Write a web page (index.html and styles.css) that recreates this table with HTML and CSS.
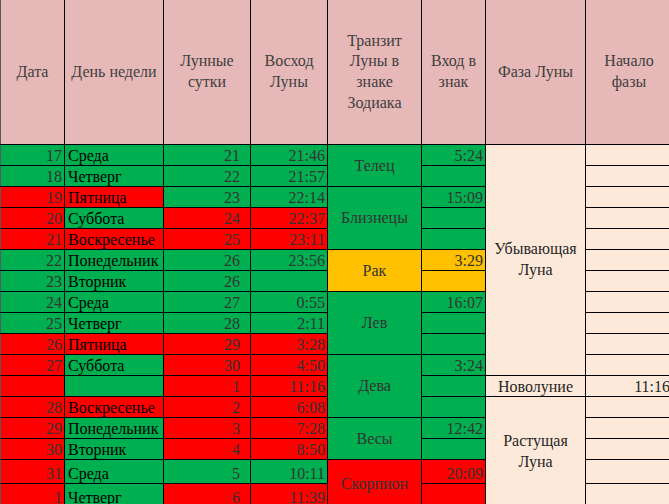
FILE: index.html
```html
<!DOCTYPE html>
<html lang="ru">
<head>
<meta charset="utf-8">
<title>Лунный календарь</title>
<link rel="stylesheet" href="styles.css">
</head>
<body>
<div class="sheet">
<table class="cal">
<colgroup>
<col class="c-date"><col class="c-day"><col class="c-lday"><col class="c-rise"><col class="c-sign"><col class="c-enter"><col class="c-phase"><col class="c-start">
</colgroup>
<thead>
<tr>
<th>Дата</th>
<th>День недели</th>
<th>Лунные<br>сутки</th>
<th>Восход<br>Луны</th>
<th>Транзит<br>Луны в<br>знаке<br>Зодиака</th>
<th>Вход в<br>знак</th>
<th>Фаза Луны</th>
<th>Начало<br>фазы</th>
</tr>
</thead>
<tbody>
<tr>
<td class="num g">17</td><td class="day g">Среда</td><td class="lun g">21</td><td class="num g">21:46</td>
<td class="sign g" rowspan="2">Телец</td><td class="num g">5:24</td>
<td class="phase" rowspan="11">Убывающая<br>Луна</td><td class="num p"></td>
</tr>
<tr>
<td class="num g">18</td><td class="day g">Четверг</td><td class="lun g">22</td><td class="num g">21:57</td>
<td class="num g"></td><td class="num p"></td>
</tr>
<tr>
<td class="num r">19</td><td class="day r">Пятница</td><td class="lun g">23</td><td class="num g">22:14</td>
<td class="sign g" rowspan="3">Близнецы</td><td class="num g">15:09</td><td class="num p"></td>
</tr>
<tr>
<td class="num r">20</td><td class="day g">Суббота</td><td class="lun r">24</td><td class="num r">22:37</td>
<td class="num g"></td><td class="num p"></td>
</tr>
<tr>
<td class="num r">21</td><td class="day r">Воскресенье</td><td class="lun r">25</td><td class="num r">23:11</td>
<td class="num g"></td><td class="num p"></td>
</tr>
<tr>
<td class="num g">22</td><td class="day g">Понедельник</td><td class="lun g">26</td><td class="num g">23:56</td>
<td class="sign y" rowspan="2">Рак</td><td class="num y">3:29</td><td class="num p"></td>
</tr>
<tr>
<td class="num g">23</td><td class="day g">Вторник</td><td class="lun g">26</td><td class="num g"></td>
<td class="num y"></td><td class="num p"></td>
</tr>
<tr>
<td class="num g">24</td><td class="day g">Среда</td><td class="lun g">27</td><td class="num g">0:55</td>
<td class="sign g" rowspan="3">Лев</td><td class="num g">16:07</td><td class="num p"></td>
</tr>
<tr>
<td class="num g">25</td><td class="day g">Четверг</td><td class="lun g">28</td><td class="num g">2:11</td>
<td class="num g"></td><td class="num p"></td>
</tr>
<tr>
<td class="num r">26</td><td class="day r">Пятница</td><td class="lun r">29</td><td class="num r">3:28</td>
<td class="num g"></td><td class="num p"></td>
</tr>
<tr>
<td class="num r">27</td><td class="day g">Суббота</td><td class="lun r">30</td><td class="num r">4:50</td>
<td class="sign g" rowspan="3">Дева</td><td class="num g">3:24</td><td class="num p"></td>
</tr>
<tr>
<td class="num r"></td><td class="day g"></td><td class="lun r">1</td><td class="num r">11:16</td>
<td class="num g"></td><td class="mid p">Новолуние</td><td class="num p">11:16</td>
</tr>
<tr>
<td class="num r">28</td><td class="day r">Воскресенье</td><td class="lun r">2</td><td class="num r">6:08</td>
<td class="num g"></td><td class="phase" rowspan="5">Растущая<br>Луна</td><td class="num p"></td>
</tr>
<tr>
<td class="num r">29</td><td class="day g">Понедельник</td><td class="lun r">3</td><td class="num r">7:28</td>
<td class="sign g" rowspan="2">Весы</td><td class="num g">12:42</td><td class="num p"></td>
</tr>
<tr>
<td class="num r">30</td><td class="day g">Вторник</td><td class="lun r">4</td><td class="num r">8:50</td>
<td class="num g"></td><td class="num p"></td>
</tr>
<tr class="tall">
<td class="num r">31</td><td class="day g">Среда</td><td class="lun g">5</td><td class="num g">10:11</td>
<td class="sign r" rowspan="2">Скорпион</td><td class="num r">20:09</td><td class="num p"></td>
</tr>
<tr class="tall">
<td class="num r">1</td><td class="day g">Четверг</td><td class="lun r">6</td><td class="num r">11:39</td>
<td class="num r"></td><td class="num p"></td>
</tr>
</tbody>
</table>
</div>
</body>
</html>
```
FILE: styles.css
```css
html, body {
  margin: 0;
  padding: 0;
  background: #ffffff;
}
.sheet {
  width: 669px;
  height: 504px;
  overflow: hidden;
}
.cal {
  border-collapse: collapse;
  table-layout: fixed;
  width: 672px;
  font-family: "Liberation Serif", "Times New Roman", serif;
  font-size: 16px;
  color: #333333;
}
.c-date { width: 64px; }
.c-day { width: 99px; }
.c-lday { width: 87px; }
.c-rise { width: 77px; }
.c-sign { width: 94px; }
.c-enter { width: 64px; }
.c-phase { width: 100px; }
.c-start { width: 87px; }

.cal th, .cal td {
  border: 1px solid #000000;
  padding: 0;
  overflow: hidden;
  white-space: nowrap;
}
.cal th {
  background: #e6b8b7;
  color: #3f3f3f;
  font-weight: normal;
  height: 144px;
  line-height: 20.7px;
  text-align: center;
  vertical-align: middle;
  border-top: none;
}
.cal th:first-child, .cal td:first-child {
  border-left: 1px solid #5a5a5a;
}
.cal td {
  height: 20px;
  line-height: 18px;
  vertical-align: bottom;
}
.cal tr.tall td {
  height: 23px;
}
.num {
  text-align: right;
  padding-right: 2px !important;
}
.lun {
  text-align: right;
  padding-right: 10px !important;
}
.day {
  text-align: left;
  padding-left: 3px !important;
  color: #000000;
}
.sign {
  text-align: center;
  vertical-align: middle !important;
}
.mid {
  text-align: center;
}
.phase {
  background: #fde9d9;
  color: #262626;
  text-align: center;
  vertical-align: middle !important;
  line-height: 20.7px !important;
}
.g { background: #00b050; }
.r { background: #ff0000; }
.y { background: #ffc000; }
.p { background: #fde9d9; color: #262626; }
```
